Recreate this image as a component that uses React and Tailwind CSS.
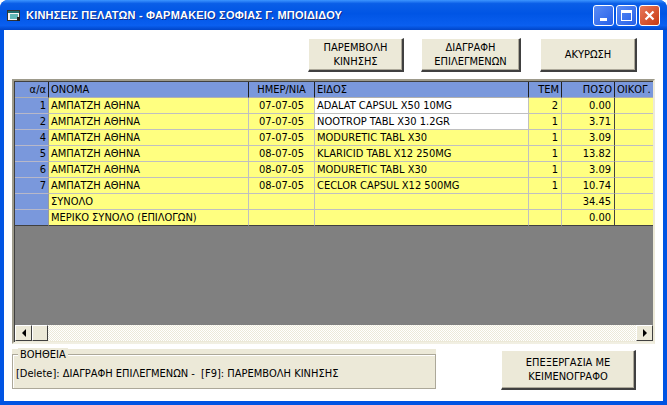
import React from "react";

const rows = [
  { n: "1", name: "ΑΜΠΑΤΖΗ ΑΘΗΝΑ", date: "07-07-05", item: "ADALAT CAPSUL X50 10MG", tem: "2", poso: "0.00", white: true },
  { n: "2", name: "ΑΜΠΑΤΖΗ ΑΘΗΝΑ", date: "07-07-05", item: "NOOTROP TABL X30 1.2GR", tem: "1", poso: "3.71", white: true },
  { n: "4", name: "ΑΜΠΑΤΖΗ ΑΘΗΝΑ", date: "07-07-05", item: "MODURETIC TABL X30", tem: "1", poso: "3.09" },
  { n: "5", name: "ΑΜΠΑΤΖΗ ΑΘΗΝΑ", date: "08-07-05", item: "KLARICID TABL X12 250MG", tem: "1", poso: "13.82" },
  { n: "6", name: "ΑΜΠΑΤΖΗ ΑΘΗΝΑ", date: "08-07-05", item: "MODURETIC TABL X30", tem: "1", poso: "3.09" },
  { n: "7", name: "ΑΜΠΑΤΖΗ ΑΘΗΝΑ", date: "08-07-05", item: "CECLOR CAPSUL X12 500MG", tem: "1", poso: "10.74" },
  { n: "", name: "ΣΥΝΟΛΟ", date: "", item: "", tem: "", poso: "34.45" },
  { n: "", name: "ΜΕΡΙΚΟ ΣΥΝΟΛΟ (ΕΠΙΛΟΓΩΝ)", date: "", item: "", tem: "", poso: "0.00" },
];

function XpButton({ children, className }) {
  return (
    <button
      className={
        "bg-[#ece9d8] border-t border-l border-white border-r-2 border-b-2 border-r-[#404040] border-b-[#404040] shadow-[inset_-1px_-1px_0_#aca899] text-black text-[11px] leading-[14px] flex items-center justify-center text-center " +
        className
      }
    >
      {children}
    </button>
  );
}

function Cell({ w, className, children }) {
  return (
    <div className={"shrink-0 h-full border-r border-b px-[2px] whitespace-nowrap overflow-hidden leading-[15px] " + w + " " + className}>
      {children}
    </div>
  );
}

function App() {
  return (
    <div className="w-[667px] h-[405px] flex flex-col bg-[#0054e3] rounded-t-[8px] overflow-hidden font-['Liberation_Sans_Narrow','Arial_Narrow','DejaVu_Sans_Condensed',sans-serif]">
      {/* title bar */}
      <div className="h-[30px] shrink-0 flex items-center pl-[7px] pr-[7px] bg-[linear-gradient(to_bottom,#3d95ff_0%,#0a5ee7_12%,#0055e5_45%,#0a5ff0_85%,#0045c8_100%)]">
        <svg width="14" height="13" viewBox="0 0 14 13" className="mr-[5px]">
          <rect x="0.5" y="1.5" width="12" height="10" fill="#f4f4f4" stroke="#333" />
          <rect x="1" y="2" width="11" height="2" fill="#1d6b6b" />
          <rect x="3" y="5" width="8" height="5" fill="#5fb7b7" />
          <rect x="10" y="8" width="3" height="4" fill="#222" />
        </svg>
        <span className="text-white font-bold text-[11px] font-['Liberation_Sans',Arial,sans-serif] [text-shadow:1px_1px_0_#0a2a8a] tracking-[0.2px]">
          ΚΙΝΗΣΕΙΣ ΠΕΛΑΤΩΝ - ΦΑΡΜΑΚΕΙΟ ΣΟΦΙΑΣ Γ. ΜΠΟΙΔΙΔΟΥ
        </span>
        <div className="ml-auto flex gap-[2px] mt-[1px]">
          <div className="w-[21px] h-[21px] rounded-[3px] border border-white bg-[linear-gradient(135deg,#5a8cf5,#2660e8)] flex items-end justify-center pb-[4px]">
            <div className="w-[7px] h-[3px] bg-white"></div>
          </div>
          <div className="w-[21px] h-[21px] rounded-[3px] border border-white bg-[linear-gradient(135deg,#5a8cf5,#2660e8)] flex items-center justify-center">
            <div className="w-[11px] h-[11px] border border-white border-t-[3px]"></div>
          </div>
          <div className="w-[21px] h-[21px] rounded-[3px] border border-white bg-[linear-gradient(135deg,#e8785a,#c83a12)] flex items-center justify-center">
            <svg width="11" height="11" viewBox="0 0 11 11">
              <path d="M1.5 1.5 L9.5 9.5 M9.5 1.5 L1.5 9.5" stroke="white" strokeWidth="2.2" />
            </svg>
          </div>
        </div>
      </div>

      {/* client area */}
      <div className="flex-1 mx-[4px] mb-[4px] bg-white flex flex-col">
        <div className="flex pt-[8px] h-[42px] shrink-0">
          <XpButton className="ml-[304px] w-[96px] h-[34px]">
            ΠΑΡΕΜΒΟΛΗ<br />ΚΙΝΗΣΗΣ
          </XpButton>
          <XpButton className="ml-[17px] w-[100px] h-[34px]">
            ΔΙΑΓΡΑΦΗ<br />ΕΠΙΛΕΓΜΕΝΩΝ
          </XpButton>
          <XpButton className="ml-[19px] w-[97px] h-[34px]">ΑΚΥΡΩΣΗ</XpButton>
        </div>

        {/* grid */}
        <div className="mt-[7px] ml-[8px] w-[643px] h-[265px] shrink-0 border-t-2 border-l-2 border-t-[#9d9a8b] border-l-[#9d9a8b] border-b-2 border-r-2 border-b-[#f1efe2] border-r-[#ece9d8] flex flex-col text-[11px] text-black">
          <div className="flex-1 flex flex-col overflow-hidden border-t border-l border-[#404040]">
            {/* header */}
            <div className="flex h-[16px] shrink-0 bg-[#7a98dc]">
              <Cell w="w-[34px]" className="text-right border-r-[#202020] border-b-[#b0b0b0]">α/α</Cell>
              <Cell w="w-[200px]" className="border-r-[#202020] border-b-[#b0b0b0]">ΟΝΟΜΑ</Cell>
              <Cell w="w-[66px]" className="text-center border-r-[#202020] border-b-[#b0b0b0]">ΗΜΕΡ/ΝΙΑ</Cell>
              <Cell w="w-[214px]" className="border-r-[#202020] border-b-[#b0b0b0]">ΕΙΔΟΣ</Cell>
              <Cell w="w-[33px]" className="text-right border-r-[#202020] border-b-[#b0b0b0]">ΤΕΜ</Cell>
              <Cell w="w-[53px]" className="text-right border-r-[#202020] border-b-[#b0b0b0]">ΠΟΣΟ</Cell>
              <Cell w="w-[60px]" className="border-r-[#202020] border-b-[#b0b0b0]">ΟΙΚΟΓ.</Cell>
            </div>
            {rows.map((r, i) => {
              const last = i === rows.length - 1;
              const bb = last ? "border-b-[#404040]" : "border-b-[#c0c0c0]";
              return (
                <div key={i} className="flex h-[16px] shrink-0 bg-[#ffff80]">
                  <Cell w="w-[34px]" className={"text-right bg-[#7a98dc] border-r-[#9a9a9a] " + (last ? bb : "border-b-[#b8b8c8]")}>{r.n}</Cell>
                  <Cell w="w-[200px]" className={"border-r-[#c0c0c0] " + bb}>{r.name}</Cell>
                  <Cell w="w-[66px]" className={"text-center border-r-[#c0c0c0] " + bb}>{r.date}</Cell>
                  <Cell w="w-[214px]" className={(r.white ? "bg-white " : "") + "border-r-[#c0c0c0] " + bb}>{r.item}</Cell>
                  <Cell w="w-[33px]" className={"text-right pr-[3px] border-r-[#c0c0c0] " + bb}>{r.tem}</Cell>
                  <Cell w="w-[53px]" className={"text-right pr-[3px] border-r-[#404040] " + bb}>{r.poso}</Cell>
                  <Cell w="w-[60px]" className={"border-r-[#c0c0c0] " + bb}></Cell>
                </div>
              );
            })}
            <div className="flex-1 bg-[#808080]"></div>
            {/* horizontal scrollbar */}
            <div className="h-[16px] shrink-0 flex bg-[repeating-conic-gradient(#ffffff_0%_25%,#ece9d8_0%_50%)] bg-[length:2px_2px]">
              <div className="w-[17px] h-full bg-[#ece9d8] border-t border-l border-t-white border-l-white border-r border-b border-r-[#404040] border-b-[#404040] flex items-center justify-center">
                <div className="w-0 h-0 border-y-[4px] border-y-transparent border-r-[4px] border-r-black"></div>
              </div>
              <div className="w-[16px] h-full bg-[#ece9d8] border-t border-l border-t-white border-l-white border-r border-b border-r-[#404040] border-b-[#404040]"></div>
              <div className="flex-1"></div>
              <div className="w-[17px] h-full bg-[#ece9d8] border-t border-l border-t-white border-l-white border-r border-b border-r-[#404040] border-b-[#404040] flex items-center justify-center">
                <div className="w-0 h-0 border-y-[4px] border-y-transparent border-l-[4px] border-l-black"></div>
              </div>
            </div>
            <div className="h-[1px] shrink-0 bg-[#ece9d8]"></div>
          </div>
        </div>

        {/* bottom */}
        <div className="flex mt-[5px] items-start">
          <div className="ml-[8px] w-[424px] h-[40px] bg-[#ece9d8] pt-[5px] relative">
            <div className="h-full border border-[#aca899] shadow-[inset_1px_1px_0_#fff,1px_1px_0_#fff] pl-[3px] pt-[12px] text-[11px] leading-[14px] text-black whitespace-nowrap">
              [Delete]: ΔΙΑΓΡΑΦΗ ΕΠΙΛΕΓΜΕΝΩΝ -&nbsp;&nbsp;[F9]: ΠΑΡΕΜΒΟΛΗ ΚΙΝΗΣΗΣ
            </div>
            <span className="absolute left-[6px] top-[-1px] bg-[#ece9d8] px-[2px] text-[11px] leading-[14px] text-black">
              ΒΟΗΘΕΙΑ
            </span>
          </div>
          <XpButton className="ml-[65px] mt-[1px] w-[135px] h-[40px]">
            ΕΠΕΞΕΡΓΑΣΙΑ ΜΕ<br />ΚΕΙΜΕΝΟΓΡΑΦΟ
          </XpButton>
        </div>
      </div>
    </div>
  );
}

export default App;
